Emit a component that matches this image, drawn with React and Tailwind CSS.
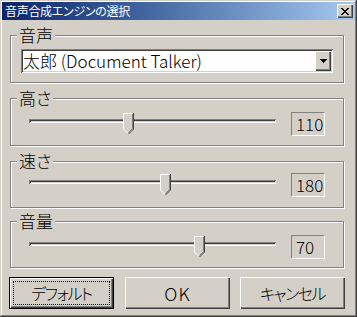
import React from "react";

const FONT = { fontFamily: '"Noto Sans CJK JP", "Noto Sans", sans-serif' };

function Thumb() {
  return (
    <svg width="11" height="21" viewBox="0 0 11 21" shapeRendering="crispEdges">
      <polygon points="0,0 11,0 11,16 5.5,21 0,16" fill="#d4d0c8" />
      <polyline points="0.5,16 0.5,0.5 10,0.5" fill="none" stroke="#ffffff" strokeWidth="1" />
      <line x1="0.5" y1="16" x2="5" y2="20.5" stroke="#ffffff" strokeWidth="1" shapeRendering="auto" />
      <polyline points="10.5,0 10.5,16 5.5,21" fill="none" stroke="#404040" strokeWidth="1" shapeRendering="auto" />
      <polyline points="9.5,1 9.5,15.5 5.5,19.5" fill="none" stroke="#808080" strokeWidth="1" shapeRendering="auto" />
    </svg>
  );
}

function Group({ label, className, children }) {
  return (
    <div className={"relative ml-[8px] w-[334px] border border-[#808080] shadow-[inset_1px_1px_0_#ffffff,1px_1px_0_#ffffff] " + className}>
      <div className="absolute -top-[10px] left-[6px] bg-[#d4d0c8] px-[2px] text-[17px] leading-[18px] font-light text-black [font-feature-settings:'palt']">
        {label}
      </div>
      {children}
    </div>
  );
}

function SliderRow({ thumbClass, value, padClass }) {
  return (
    <div className={"flex items-start pl-[18px] " + padClass}>
      <div className="relative h-[21px] w-[247px] mt-[1px]">
        <div className="mt-[6px] h-[4px] w-full bg-[#d4d0c8] shadow-[inset_1px_1px_0_#808080,inset_-1px_-1px_0_#ffffff,inset_2px_2px_0_#404040]" />
        <div className={"absolute top-0 " + thumbClass}>
          <Thumb />
        </div>
      </div>
      <div className="ml-[15px] flex h-[24px] w-[34px] items-center border border-t-[#808080] border-l-[#808080] border-b-[#ffffff] border-r-[#ffffff] pl-[4px] text-[17px] leading-[18px] font-light text-black">
        {value}
      </div>
    </div>
  );
}

function Button({ children, def, className, textClass }) {
  return (
    <div className={"h-[32px] w-[105px] " + (def ? "border border-black " : "") + className}>
      <div className="relative flex h-full w-full items-center justify-center bg-[#d4d0c8] shadow-[inset_1px_1px_0_#ffffff,inset_-1px_-1px_0_#404040,inset_-2px_-2px_0_#808080] leading-[18px] font-light text-black [font-feature-settings:'palt']">
        {def && <div className="absolute inset-[3px] border border-dotted border-black" />}
        <span className={"relative " + textClass}>{children}</span>
      </div>
    </div>
  );
}

export default function App() {
  return (
    <div
      style={FONT}
      className="flex h-[317px] w-[357px] flex-col bg-[#d4d0c8] px-[2px] pt-[2px] shadow-[inset_-1px_-1px_0_#404040,inset_1px_1px_0_#d4d0c8,inset_-2px_-2px_0_#808080,inset_2px_2px_0_#ffffff]"
    >
      {/* title bar */}
      <div className="flex h-[18px] items-center bg-gradient-to-r from-[#0a246a] to-[#a6caf0] pl-[3px] pr-[2px]">
        <span className="text-[12px] leading-[14px] tracking-[-0.3px] text-white [font-feature-settings:'palt']">音声合成エンジンの選択</span>
        <div className="ml-auto flex h-[14px] w-[16px] items-center justify-center bg-[#d4d0c8] shadow-[inset_1px_1px_0_#ffffff,inset_-1px_-1px_0_#404040,inset_-2px_-2px_0_#808080]">
          <svg width="8" height="7" viewBox="0 0 8 7" shapeRendering="crispEdges">
            <path d="M0 0h2v1h-2zM6 0h2v1h-2zM1 1h2v1h-2zM5 1h2v1h-2zM2 2h4v1h-4zM3 3h2v1h-2zM2 4h4v1h-4zM1 5h2v1h-2zM5 5h2v1h-2zM0 6h2v1h-2zM6 6h2v1h-2z" fill="#000" />
          </svg>
        </div>
      </div>

      {/* 音声 */}
      <Group label="音声" className="mt-[15px] h-[48px]">
        <div className="ml-[10px] mt-[13px] flex h-[24px] w-[312px] items-center bg-white shadow-[inset_1px_1px_0_#808080,inset_-1px_-1px_0_#ffffff,inset_2px_2px_0_#404040,inset_-2px_-2px_0_#d4d0c8]">
          <span className="pl-[2px] text-[17px] leading-[18px] font-light text-black">太郎 (Document Talker)</span>
          <div className="ml-auto mr-[2px] flex h-[20px] w-[16px] items-center justify-center bg-[#d4d0c8] shadow-[inset_1px_1px_0_#ffffff,inset_-1px_-1px_0_#404040,inset_-2px_-2px_0_#808080]">
            <svg width="7" height="4" viewBox="0 0 7 4" shapeRendering="crispEdges">
              <path d="M0 0h7v1h-7zM1 1h5v1h-5zM2 2h3v1h-3zM3 3h1v1h-1z" fill="#000" />
            </svg>
          </div>
        </div>
      </Group>

      {/* 高さ */}
      <Group label="高さ" className="mt-[15px] h-[48px]">
        <SliderRow padClass="pt-[13px]" thumbClass="left-[94px]" value="110" />
      </Group>

      {/* 速さ */}
      <Group label="速さ" className="mt-[15px] h-[47px]">
        <SliderRow padClass="pt-[11px]" thumbClass="left-[131px]" value="180" />
      </Group>

      {/* 音量 */}
      <Group label="音量" className="mt-[13px] h-[47px]">
        <SliderRow padClass="pt-[13px]" thumbClass="left-[165px]" value="70" />
      </Group>

      {/* buttons */}
      <div className="mt-[9px] flex">
        <Button def className="ml-[7px]" textClass="text-[16px] tracking-[-1.5px]">デフォルト</Button>
        <Button className="ml-[11px]" textClass="text-[18px] tracking-[1px]">OK</Button>
        <Button className="ml-[10px]" textClass="text-[16px] tracking-[-1.5px]">キャンセル</Button>
      </div>
    </div>
  );
}
